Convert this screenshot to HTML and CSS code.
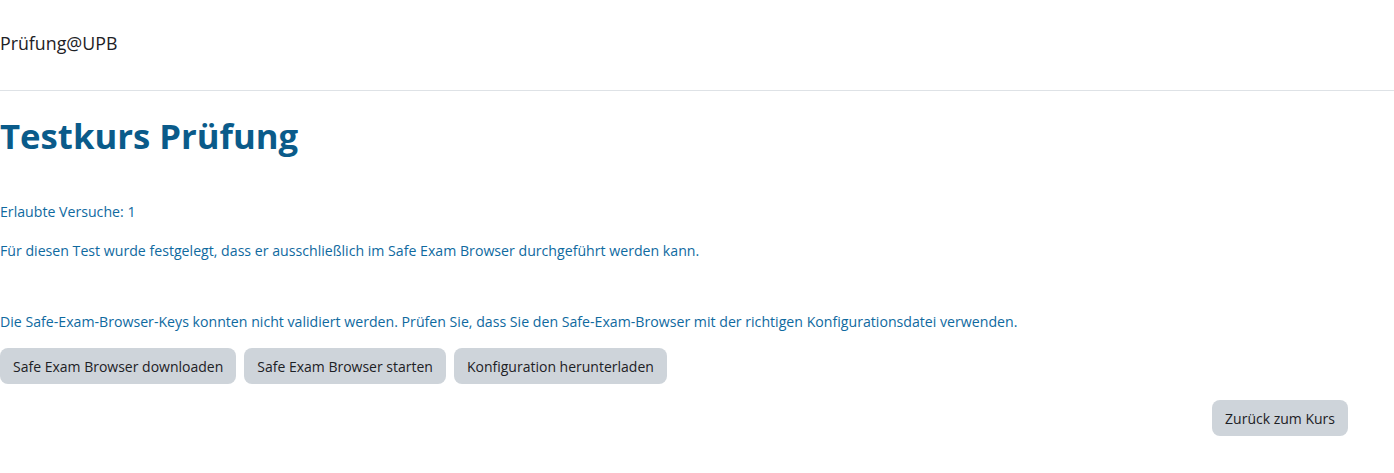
FILE: index.html
```html
<!DOCTYPE html>
<html lang="de">
<head>
    <meta charset="UTF-8">
    <title>Testkurs Prüfung</title>
    <link rel="stylesheet" href="styles.css">
</head>
<body>
    <header class="topbar">
        <span class="site-name">Prüfung@UPB</span>
    </header>

    <div class="page">
        <h1 class="page-title">Testkurs Prüfung</h1>

        <div class="quiz-info">
            <p>Erlaubte Versuche: 1</p>
            <p>Für diesen Test wurde festgelegt, dass er ausschließlich im Safe Exam Browser durchgeführt werden kann.</p>
        </div>

        <div class="seb-box">
            <p>Die Safe-Exam-Browser-Keys konnten nicht validiert werden. Prüfen Sie, dass Sie den Safe-Exam-Browser mit der richtigen Konfigurationsdatei verwenden.</p>
            <div class="button-row">
                <button class="btn">Safe Exam Browser downloaden</button>
                <button class="btn">Safe Exam Browser starten</button>
                <button class="btn">Konfiguration herunterladen</button>
            </div>
        </div>

        <div class="back-row">
            <button class="btn">Zurück zum Kurs</button>
        </div>
    </div>
</body>
</html>
```

FILE: styles.css
```css
* {
    margin: 0;
    padding: 0;
    box-sizing: border-box;
}

body {
    font-family: "Open Sans", "Noto Sans", sans-serif;
    background-color: #fff;
    color: #1d2125;
}

.topbar {
    height: 91px;
    display: flex;
    align-items: center;
    border-bottom: 1px solid #dee2e6;
    padding-bottom: 4px;
}

.site-name {
    font-size: 17.8px;
    color: #1d2125;
}

.page {
    padding-right: 46px;
}

.page-title {
    font-size: 34.7px;
    font-weight: 700;
    color: #0a5b8a;
    margin-top: 21px;
    line-height: 48px;
}

.quiz-info {
    margin-top: 41px;
    font-size: 14.15px;
    color: #0f6a9f;
}

.quiz-info p {
    line-height: 22px;
    margin-bottom: 17px;
}

.seb-box {
    margin-top: 49px;
    font-size: 14.15px;
    color: #0f6a9f;
}

.seb-box p {
    line-height: 22px;
}

.button-row {
    display: flex;
    gap: 8px;
    margin-top: 15px;
}

.btn {
    font-family: inherit;
    font-size: 14px;
    color: #1d2125;
    background-color: #ced4da;
    border: none;
    border-radius: 8px;
    height: 36px;
    padding: 0 13px;
    cursor: pointer;
}

.btn:hover {
    background-color: #b8bfc6;
}

.back-row {
    display: flex;
    justify-content: flex-end;
    margin-top: 16px;
}
```
